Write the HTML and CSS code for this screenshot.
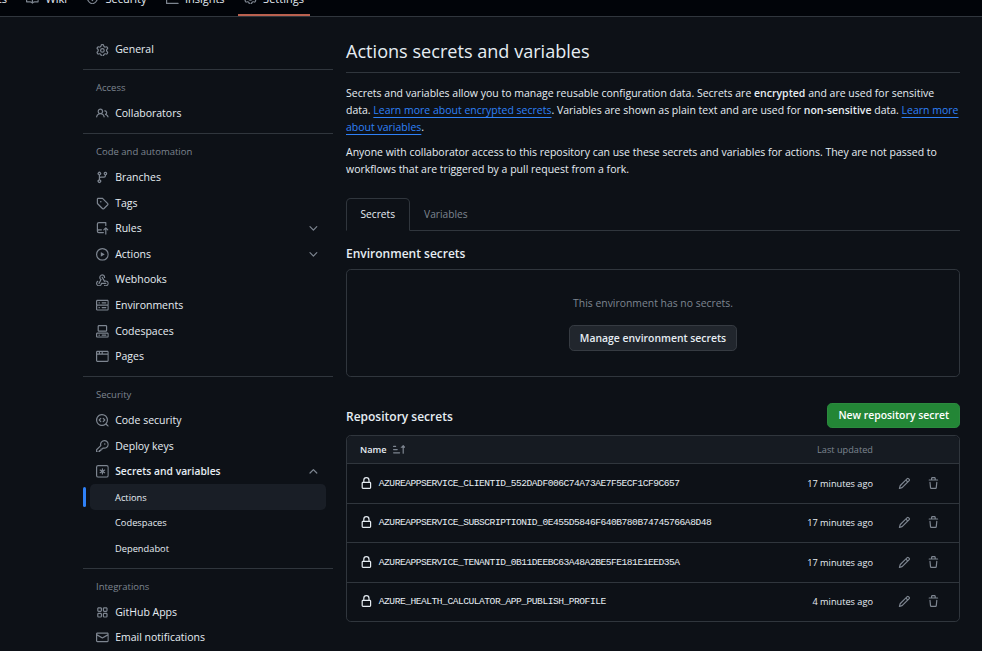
FILE: index.html
```html
<!DOCTYPE html>
<html>
<head>
    <title>Actions secrets and variables</title>
    <link rel="stylesheet" href="styles.css">
</head>
<body>
    <svg class="sprite" xmlns="http://www.w3.org/2000/svg">
        <symbol id="i-book" viewBox="0 0 16 16"><path d="M0 1.75A.75.75 0 0 1 .75 1h4.253c1.227 0 2.317.59 3 1.501A3.743 3.743 0 0 1 11.006 1h4.245a.75.75 0 0 1 .75.75v10.5a.75.75 0 0 1-.75.75h-4.507a2.25 2.25 0 0 0-1.591.659l-.622.621a.75.75 0 0 1-1.06 0l-.622-.621A2.25 2.25 0 0 0 5.258 13H.75a.75.75 0 0 1-.75-.75Zm7.251 10.324.004-5.073-.002-2.253A2.25 2.25 0 0 0 5.003 2.5H1.5v9h3.757a3.75 3.75 0 0 1 1.994.574ZM8.755 4.75l-.004 7.322a3.752 3.752 0 0 1 1.992-.572H14.5v-9h-3.495a2.25 2.25 0 0 0-2.25 2.25Z"/></symbol>
        <symbol id="i-shield" viewBox="0 0 16 16"><path d="M7.467.133a1.748 1.748 0 0 1 1.066 0l5.25 1.68A1.75 1.75 0 0 1 15 3.48V7c0 1.566-.32 3.182-1.303 4.682-.983 1.498-2.585 2.813-5.032 3.855a1.697 1.697 0 0 1-1.33 0c-2.447-1.042-4.049-2.357-5.032-3.855C1.32 10.182 1 8.566 1 7V3.48a1.75 1.75 0 0 1 1.217-1.667Zm.61 1.429a.25.25 0 0 0-.153 0l-5.25 1.68a.25.25 0 0 0-.174.238V7c0 1.358.275 2.666 1.057 3.86.784 1.194 2.121 2.34 4.366 3.297a.196.196 0 0 0 .154 0c2.245-.956 3.582-2.104 4.366-3.298C13.225 9.666 13.5 8.36 13.5 7V3.48a.251.251 0 0 0-.174-.237l-5.25-1.68ZM8.75 4.75v3a.75.75 0 0 1-1.5 0v-3a.75.75 0 0 1 1.5 0ZM9 10.5a1 1 0 1 1-2 0 1 1 0 0 1 2 0Z"/></symbol>
        <symbol id="i-graph" viewBox="0 0 16 16"><path d="M1.5 1.75V13.5h13.75a.75.75 0 0 1 0 1.5H.75a.75.75 0 0 1-.75-.75V1.75a.75.75 0 0 1 1.5 0Zm14.28 2.53-5.25 5.25a.75.75 0 0 1-1.06 0L7 7.06 4.28 9.78a.751.751 0 0 1-1.042-.018.751.751 0 0 1-.018-1.042l3.25-3.25a.75.75 0 0 1 1.06 0L10 7.94l4.72-4.72a.751.751 0 0 1 1.042.018.751.751 0 0 1 .018 1.042Z"/></symbol>
        <symbol id="i-gear" viewBox="0 0 16 16"><path d="M8 0a8.2 8.2 0 0 1 .701.031C9.444.095 9.99.645 10.16 1.29l.288 1.107c.018.066.079.158.212.224.231.114.454.243.668.386.123.082.233.09.299.071l1.103-.303c.644-.176 1.392.021 1.82.63.27.385.506.792.704 1.218.315.675.111 1.422-.364 1.891l-.814.806c-.049.048-.098.147-.088.294.016.257.016.515 0 .772-.01.147.038.246.088.294l.814.806c.475.469.679 1.216.364 1.891a7.977 7.977 0 0 1-.704 1.217c-.428.61-1.176.807-1.82.63l-1.102-.302c-.067-.019-.177-.011-.3.071a5.909 5.909 0 0 1-.668.386c-.133.066-.194.158-.211.224l-.29 1.106c-.168.646-.715 1.196-1.458 1.26a8.006 8.006 0 0 1-1.402 0c-.743-.064-1.289-.614-1.458-1.26l-.289-1.106c-.018-.066-.079-.158-.212-.224a5.738 5.738 0 0 1-.668-.386c-.123-.082-.233-.09-.299-.071l-1.103.303c-.644.176-1.392-.021-1.82-.63a8.12 8.12 0 0 1-.704-1.218c-.315-.675-.111-1.422.363-1.891l.815-.806c.05-.048.098-.147.088-.294a6.214 6.214 0 0 1 0-.772c.01-.147-.038-.246-.088-.294l-.815-.806C.635 6.045.431 5.298.746 4.623a7.92 7.92 0 0 1 .704-1.217c.428-.61 1.176-.807 1.82-.63l1.102.302c.067.019.177.011.3-.071.214-.143.437-.272.668-.386.133-.066.194-.158.211-.224l.29-1.106C6.009.645 6.556.095 7.299.03 7.53.01 7.764 0 8 0Zm-.571 1.525c-.036.003-.108.036-.137.146l-.289 1.105c-.147.561-.549.967-.998 1.189-.173.086-.34.183-.5.29-.417.278-.97.423-1.529.27l-1.103-.303c-.109-.03-.175.016-.195.045-.22.312-.412.644-.573.99-.014.031-.021.11.059.19l.815.806c.411.406.562.957.53 1.456a4.709 4.709 0 0 0 0 .582c.032.499-.119 1.05-.53 1.456l-.815.806c-.081.08-.073.159-.059.19.162.346.353.677.573.989.02.03.085.076.195.046l1.102-.303c.56-.153 1.113-.008 1.53.27.161.107.328.204.501.29.447.222.85.629.997 1.189l.289 1.105c.029.109.101.143.137.146a6.6 6.6 0 0 0 1.142 0c.036-.003.108-.036.137-.146l.289-1.105c.147-.561.549-.967.998-1.189.173-.086.34-.183.5-.29.417-.278.97-.423 1.529-.27l1.103.303c.109.029.175-.016.195-.045.22-.313.411-.644.573-.99.014-.031.021-.11-.059-.19l-.815-.806c-.411-.406-.562-.957-.53-1.456a4.709 4.709 0 0 0 0-.582c-.032-.499.119-1.05.53-1.456l.815-.806c.081-.08.073-.159.059-.19a6.464 6.464 0 0 0-.573-.989c-.02-.03-.085-.076-.195-.046l-1.102.303c-.56.153-1.113.008-1.53-.27a4.44 4.44 0 0 0-.501-.29c-.447-.222-.85-.629-.997-1.189l-.289-1.105c-.029-.11-.101-.143-.137-.146a6.6 6.6 0 0 0-1.142 0ZM11 8a3 3 0 1 1-6 0 3 3 0 0 1 6 0ZM9.5 8a1.5 1.5 0 1 0-3.001.001A1.5 1.5 0 0 0 9.5 8Z"/></symbol>
        <symbol id="i-people" viewBox="0 0 16 16"><path d="M2 5.5a3.5 3.5 0 1 1 5.898 2.549 5.508 5.508 0 0 1 3.034 4.084.75.75 0 1 1-1.482.235 4 4 0 0 0-7.9 0 .75.75 0 0 1-1.482-.236A5.507 5.507 0 0 1 3.102 8.05 3.493 3.493 0 0 1 2 5.5ZM11 4a3.001 3.001 0 0 1 2.22 5.018 5.01 5.01 0 0 1 2.56 3.012.749.749 0 0 1-.885.954.752.752 0 0 1-.549-.514 3.507 3.507 0 0 0-2.522-2.372.75.75 0 0 1-.574-.73v-.352a.75.75 0 0 1 .416-.672A1.5 1.5 0 0 0 11 5.5.75.75 0 0 1 11 4Zm-5.5-.5a2 2 0 1 0-.001 3.999A2 2 0 0 0 5.5 3.5Z"/></symbol>
        <symbol id="i-branch" viewBox="0 0 16 16"><path d="M9.5 3.25a2.25 2.25 0 1 1 3 2.122V6A2.5 2.5 0 0 1 10 8.5H6a1 1 0 0 0-1 1v1.128a2.251 2.251 0 1 1-1.5 0V5.372a2.25 2.25 0 1 1 1.5 0v1.836A2.493 2.493 0 0 1 6 7h4a1 1 0 0 0 1-1v-.628A2.25 2.25 0 0 1 9.5 3.25Zm-6 0a.75.75 0 1 0 1.5 0 .75.75 0 0 0-1.5 0Zm8.25-.75a.75.75 0 1 0 0 1.5.75.75 0 0 0 0-1.5ZM4.25 12a.75.75 0 1 0 0 1.5.75.75 0 0 0 0-1.5Z"/></symbol>
        <symbol id="i-tag" viewBox="0 0 16 16"><path d="M1 7.775V2.75C1 1.784 1.784 1 2.75 1h5.025c.464 0 .91.184 1.238.513l6.25 6.25a1.75 1.75 0 0 1 0 2.474l-5.026 5.026a1.75 1.75 0 0 1-2.474 0l-6.25-6.25A1.752 1.752 0 0 1 1 7.775Zm1.5 0c0 .066.026.13.073.177l6.25 6.25a.25.25 0 0 0 .354 0l5.025-5.025a.25.25 0 0 0 0-.354l-6.25-6.25a.25.25 0 0 0-.177-.073H2.75a.25.25 0 0 0-.25.25ZM6 5a1 1 0 1 1 0 2 1 1 0 0 1 0-2Z"/></symbol>
        <symbol id="i-rules" viewBox="0 0 16 16"><path d="M1 2.5A2.5 2.5 0 0 1 3.5 0h8.75a.75.75 0 0 1 .75.75v3.5a.75.75 0 0 1-1.5 0V1.5h-8a1 1 0 0 0-1 1v6.708A2.493 2.493 0 0 1 3.5 9h3.25a.75.75 0 0 1 0 1.5H3.5a1 1 0 0 0 0 2h5.75a.75.75 0 0 1 0 1.5H3.5A2.5 2.5 0 0 1 1 11.5Zm13.23 7.79h-.001l-1.224-1.224v6.184a.75.75 0 0 1-1.5 0V9.066L10.28 10.29a.75.75 0 0 1-1.06-1.061l2.505-2.504a.75.75 0 0 1 1.06 0L15.29 9.23a.751.751 0 0 1-.018 1.042.751.751 0 0 1-1.042.018Z"/></symbol>
        <symbol id="i-play" viewBox="0 0 16 16"><path d="M8 0a8 8 0 1 1 0 16A8 8 0 0 1 8 0ZM1.5 8a6.5 6.5 0 1 0 13 0 6.5 6.5 0 0 0-13 0Zm4.879-2.773 4.264 2.559a.25.25 0 0 1 0 .428l-4.264 2.559A.25.25 0 0 1 6 10.559V5.442a.25.25 0 0 1 .379-.215Z"/></symbol>
        <symbol id="i-webhook" viewBox="0 0 16 16"><path d="M5.5 4.25a2.25 2.25 0 0 1 4.5 0 .75.75 0 0 0 1.5 0 3.75 3.75 0 1 0-6.14 2.889l-2.272 4.258a.75.75 0 0 0 1.324.706L7 7.25a.75.75 0 0 0-.309-1.015A2.25 2.25 0 0 1 5.5 4.25Z"/><path d="M7.364 3.607a.75.75 0 0 1 1.03.257l2.608 4.349a3.75 3.75 0 1 1-.628 6.785.75.75 0 0 1 .752-1.299 2.25 2.25 0 1 0-.033-3.88.75.75 0 0 1-1.03-.256L7.107 4.636a.75.75 0 0 1 .257-1.03Z"/><path d="M2.9 8.776A.75.75 0 0 1 2.625 9.8 2.25 2.25 0 1 0 6 11.75a.75.75 0 0 1 .75-.751h5.5a.75.75 0 0 1 0 1.5H7.425a3.751 3.751 0 1 1-5.55-3.998.75.75 0 0 1 1.024.274Z"/></symbol>
        <symbol id="i-server" viewBox="0 0 16 16"><path d="M1.75 1h12.5c.966 0 1.75.784 1.75 1.75v4c0 .372-.116.717-.314 1 .198.283.314.628.314 1v4a1.75 1.75 0 0 1-1.75 1.75H1.75A1.75 1.75 0 0 1 0 13.25v-4c0-.372.116-.717.314-1a1.739 1.739 0 0 1-.314-1v-4C0 1.784.784 1 1.75 1ZM1.5 2.75v4c0 .138.112.25.25.25h12.5a.25.25 0 0 0 .25-.25v-4a.25.25 0 0 0-.25-.25H1.75a.25.25 0 0 0-.25.25Zm.25 5.75a.25.25 0 0 0-.25.25v4c0 .138.112.25.25.25h12.5a.25.25 0 0 0 .25-.25v-4a.25.25 0 0 0-.25-.25ZM7 4.75A.75.75 0 0 1 7.75 4h4.5a.75.75 0 0 1 0 1.5h-4.5A.75.75 0 0 1 7 4.75ZM7.75 10h4.5a.75.75 0 0 1 0 1.5h-4.5a.75.75 0 0 1 0-1.5ZM3 4.75A.75.75 0 0 1 3.75 4h.5a.75.75 0 0 1 0 1.5h-.5A.75.75 0 0 1 3 4.75ZM3.75 10h.5a.75.75 0 0 1 0 1.5h-.5a.75.75 0 0 1 0-1.5Z"/></symbol>
        <symbol id="i-codespaces" viewBox="0 0 16 16"><path d="M0 11.25c0-.966.784-1.75 1.75-1.75h12.5c.966 0 1.75.784 1.75 1.75v3A1.75 1.75 0 0 1 14.25 16H1.75A1.75 1.75 0 0 1 0 14.25Zm2-9.5C2 .784 2.784 0 3.75 0h8.5C13.216 0 14 .784 14 1.75v5a1.75 1.75 0 0 1-1.75 1.75h-8.5A1.75 1.75 0 0 1 2 6.75Zm1.75-.25a.25.25 0 0 0-.25.25v5c0 .138.112.25.25.25h8.5a.25.25 0 0 0 .25-.25v-5a.25.25 0 0 0-.25-.25Zm-2 9.5a.25.25 0 0 0-.25.25v3c0 .138.112.25.25.25h12.5a.25.25 0 0 0 .25-.25v-3a.25.25 0 0 0-.25-.25Z"/><path d="M7 12.75a.75.75 0 0 1 .75-.75h4.5a.75.75 0 0 1 0 1.5h-4.5a.75.75 0 0 1-.75-.75Zm-4 0a.75.75 0 0 1 .75-.75h.5a.75.75 0 0 1 0 1.5h-.5a.75.75 0 0 1-.75-.75Z"/></symbol>
        <symbol id="i-browser" viewBox="0 0 16 16"><path d="M0 2.75C0 1.784.784 1 1.75 1h12.5c.966 0 1.75.784 1.75 1.75v10.5A1.75 1.75 0 0 1 14.25 15H1.75A1.75 1.75 0 0 1 0 13.25ZM14.5 6h-13v7.25c0 .138.112.25.25.25h12.5a.25.25 0 0 0 .25-.25Zm-6-3.5v2h6V2.75a.25.25 0 0 0-.25-.25ZM5 2.5v2h2v-2Zm-3.25 0a.25.25 0 0 0-.25.25V4.5h2v-2Z"/></symbol>
        <symbol id="i-codescan" viewBox="0 0 16 16"><path d="M8.47 4.97a.75.75 0 0 0 0 1.06L9.94 7.5 8.47 8.97a.75.75 0 1 0 1.06 1.06l2-2a.75.75 0 0 0 0-1.06l-2-2a.75.75 0 0 0-1.06 0ZM6.53 6.03a.75.75 0 0 0-1.06-1.06l-2 2a.75.75 0 0 0 0 1.06l2 2a.75.75 0 1 0 1.06-1.06L5.06 7.5l1.47-1.47Z"/><path d="M12.246 13.307a7.501 7.501 0 1 1 1.06-1.06l2.474 2.473a.749.749 0 0 1-.326 1.275.749.749 0 0 1-.734-.215ZM1.5 7.5a6.002 6.002 0 0 0 3.608 5.504 6.002 6.002 0 0 0 6.486-1.117.748.748 0 0 1 .292-.293A6 6 0 1 0 1.5 7.5Z"/></symbol>
        <symbol id="i-key" viewBox="0 0 16 16"><path d="M10.5 0a5.499 5.499 0 1 1-1.288 10.848l-.932.932a.749.749 0 0 1-.53.22H7v.75a.749.749 0 0 1-.22.53l-.5.5a.749.749 0 0 1-.53.22H5v.75a.749.749 0 0 1-.22.53l-.5.5a.749.749 0 0 1-.53.22h-2A1.75 1.75 0 0 1 0 14.25v-2c0-.199.079-.389.22-.53l4.932-4.932A5.5 5.5 0 0 1 10.5 0Zm-4 5.5c-.001.431.069.86.205 1.269a.75.75 0 0 1-.181.768L1.5 12.56v1.69c0 .138.112.25.25.25h1.69l.06-.06v-1.19a.75.75 0 0 1 .75-.75h1.19l.06-.06v-1.19a.75.75 0 0 1 .75-.75h1.19l1.023-1.025a.75.75 0 0 1 .768-.18A4 4 0 1 0 6.5 5.5ZM11 6a1 1 0 1 1 0-2 1 1 0 0 1 0 2Z"/></symbol>
        <symbol id="i-asterisk" viewBox="0 0 16 16"><path d="M0 2.75A2.75 2.75 0 0 1 2.75 0h10.5A2.75 2.75 0 0 1 16 2.75v10.5A2.75 2.75 0 0 1 13.25 16H2.75A2.75 2.75 0 0 1 0 13.25ZM2.75 1.5c-.69 0-1.25.56-1.25 1.25v10.5c0 .69.56 1.25 1.25 1.25h10.5c.69 0 1.25-.56 1.25-1.25V2.75c0-.69-.56-1.25-1.25-1.25Z"/><path d="M8 4a.75.75 0 0 1 .75.75V6.7l1.69-.975a.75.75 0 0 1 .75 1.3L9.5 8l1.69.976a.75.75 0 0 1-.75 1.298L8.75 9.3v1.951a.75.75 0 0 1-1.5 0V9.299l-1.69.976a.75.75 0 0 1-.75-1.3L6.5 8l-1.69-.975a.75.75 0 0 1 .75-1.3l1.69.976V4.75A.75.75 0 0 1 8 4Z"/></symbol>
        <symbol id="i-apps" viewBox="0 0 16 16"><path d="M1.5 3.25c0-.966.784-1.75 1.75-1.75h2.5c.966 0 1.75.784 1.75 1.75v2.5A1.75 1.75 0 0 1 5.75 7.5h-2.5A1.75 1.75 0 0 1 1.5 5.75Zm7 0c0-.966.784-1.75 1.75-1.75h2.5c.966 0 1.75.784 1.75 1.75v2.5a1.75 1.75 0 0 1-1.75 1.75h-2.5A1.75 1.75 0 0 1 8.5 5.75Zm-7 7c0-.966.784-1.75 1.75-1.75h2.5c.966 0 1.75.784 1.75 1.75v2.5a1.75 1.75 0 0 1-1.75 1.75h-2.5a1.75 1.75 0 0 1-1.75-1.75Zm7 0c0-.966.784-1.75 1.75-1.75h2.5c.966 0 1.75.784 1.75 1.75v2.5a1.75 1.75 0 0 1-1.75 1.75h-2.5a1.75 1.75 0 0 1-1.75-1.75ZM3.25 3a.25.25 0 0 0-.25.25v2.5c0 .138.112.25.25.25h2.5A.25.25 0 0 0 6 5.75v-2.5A.25.25 0 0 0 5.75 3Zm7 0a.25.25 0 0 0-.25.25v2.5c0 .138.112.25.25.25h2.5a.25.25 0 0 0 .25-.25v-2.5a.25.25 0 0 0-.25-.25Zm-7 7a.25.25 0 0 0-.25.25v2.5c0 .138.112.25.25.25h2.5a.25.25 0 0 0 .25-.25v-2.5a.25.25 0 0 0-.25-.25Zm7 0a.25.25 0 0 0-.25.25v2.5c0 .138.112.25.25.25h2.5a.25.25 0 0 0 .25-.25v-2.5a.25.25 0 0 0-.25-.25Z"/></symbol>
        <symbol id="i-mail" viewBox="0 0 16 16"><path d="M1.75 2h12.5c.966 0 1.75.784 1.75 1.75v8.5A1.75 1.75 0 0 1 14.25 14H1.75A1.75 1.75 0 0 1 0 12.25v-8.5C0 2.784.784 2 1.75 2ZM1.5 12.251c0 .138.112.25.25.25h12.5a.25.25 0 0 0 .25-.25V5.809L8.38 9.397a.75.75 0 0 1-.76 0L1.5 5.809v6.442Zm13-8.181v-.32a.25.25 0 0 0-.25-.25H1.75a.25.25 0 0 0-.25.25v.32L8 7.88Z"/></symbol>
        <symbol id="i-down" viewBox="0 0 16 16"><path d="M12.78 5.22a.749.749 0 0 1 0 1.06l-4.25 4.25a.749.749 0 0 1-1.06 0L3.22 6.28a.749.749 0 1 1 1.06-1.06L8 8.939l3.72-3.719a.749.749 0 0 1 1.06 0Z"/></symbol>
        <symbol id="i-up" viewBox="0 0 16 16"><path d="M3.22 10.53a.749.749 0 0 1 0-1.06l4.25-4.25a.749.749 0 0 1 1.06 0l4.25 4.25a.749.749 0 1 1-1.06 1.06L8 6.811 4.28 10.53a.749.749 0 0 1-1.06 0Z"/></symbol>
        <symbol id="i-lock" viewBox="0 0 16 16"><path d="M4 4a4 4 0 0 1 8 0v2h.25c.966 0 1.75.784 1.75 1.75v5.5A1.75 1.75 0 0 1 12.25 15h-8.5A1.75 1.75 0 0 1 2 13.25v-5.5C2 6.784 2.784 6 3.75 6H4Zm8.25 3.5h-8.5a.25.25 0 0 0-.25.25v5.5c0 .138.112.25.25.25h8.5a.25.25 0 0 0 .25-.25v-5.5a.25.25 0 0 0-.25-.25ZM10.5 6V4a2.5 2.5 0 1 0-5 0v2Z"/></symbol>
        <symbol id="i-pencil" viewBox="0 0 16 16"><path d="M11.013 1.427a1.75 1.75 0 0 1 2.474 0l1.086 1.086a1.75 1.75 0 0 1 0 2.474l-8.61 8.61c-.21.21-.47.364-.756.445l-3.251.93a.75.75 0 0 1-.927-.928l.929-3.25c.081-.286.235-.547.445-.758l8.61-8.61Zm.176 4.823L9.75 4.81l-6.286 6.287a.253.253 0 0 0-.064.108l-.558 1.953 1.953-.558a.253.253 0 0 0 .108-.064Zm1.238-3.763a.25.25 0 0 0-.354 0L10.811 3.75l1.439 1.44 1.263-1.263a.25.25 0 0 0 0-.354Z"/></symbol>
        <symbol id="i-trash" viewBox="0 0 16 16"><path d="M11 1.75V3h2.25a.75.75 0 0 1 0 1.5H2.75a.75.75 0 0 1 0-1.5H5V1.75C5 .784 5.784 0 6.75 0h2.5C10.216 0 11 .784 11 1.75ZM4.496 6.675l.66 6.6a.25.25 0 0 0 .249.225h5.19a.25.25 0 0 0 .249-.225l.66-6.6a.75.75 0 0 1 1.492.149l-.66 6.6A1.748 1.748 0 0 1 10.595 15h-5.19a1.75 1.75 0 0 1-1.741-1.575l-.66-6.6a.75.75 0 1 1 1.492-.15ZM6.5 1.75V3h3V1.75a.25.25 0 0 0-.25-.25h-2.5a.25.25 0 0 0-.25.25Z"/></symbol>
        <symbol id="i-sort" viewBox="0 0 16 16"><path d="m12.927 2.573 3 3A.25.25 0 0 1 15.75 6H13.5v6.75a.75.75 0 0 1-1.5 0V6H9.75a.25.25 0 0 1-.177-.427l3-3a.25.25 0 0 1 .354 0ZM0 12.25a.75.75 0 0 1 .75-.75h7.5a.75.75 0 0 1 0 1.5H.75a.75.75 0 0 1-.75-.75Zm0-4a.75.75 0 0 1 .75-.75h4.5a.75.75 0 0 1 0 1.5H.75A.75.75 0 0 1 0 8.25Zm0-4a.75.75 0 0 1 .75-.75h2.5a.75.75 0 0 1 0 1.5H.75A.75.75 0 0 1 0 4.25Z"/></symbol>
    </svg>

    <div class="repo-nav">
        <a class="repo-tab tab-first">Projects</a>
        <a class="repo-tab"><svg class="icon"><use href="#i-book"/></svg>Wiki</a>
        <a class="repo-tab"><svg class="icon"><use href="#i-shield"/></svg>Security</a>
        <a class="repo-tab"><svg class="icon"><use href="#i-graph"/></svg>Insights</a>
        <a class="repo-tab selected"><svg class="icon"><use href="#i-gear"/></svg>Settings</a>
    </div>

    <div class="page">
        <nav class="side">
            <a class="side-item"><svg class="icon"><use href="#i-gear"/></svg>General</a>
            <hr class="side-line">
            <div class="side-head">Access</div>
            <a class="side-item"><svg class="icon"><use href="#i-people"/></svg>Collaborators</a>
            <hr class="side-line">
            <div class="side-head">Code and automation</div>
            <a class="side-item"><svg class="icon"><use href="#i-branch"/></svg>Branches</a>
            <a class="side-item"><svg class="icon"><use href="#i-tag"/></svg>Tags</a>
            <a class="side-item"><svg class="icon"><use href="#i-rules"/></svg>Rules<svg class="icon chevron"><use href="#i-down"/></svg></a>
            <a class="side-item"><svg class="icon"><use href="#i-play"/></svg>Actions<svg class="icon chevron"><use href="#i-down"/></svg></a>
            <a class="side-item"><svg class="icon"><use href="#i-webhook"/></svg>Webhooks</a>
            <a class="side-item"><svg class="icon"><use href="#i-server"/></svg>Environments</a>
            <a class="side-item"><svg class="icon"><use href="#i-codespaces"/></svg>Codespaces</a>
            <a class="side-item"><svg class="icon"><use href="#i-browser"/></svg>Pages</a>
            <hr class="side-line">
            <div class="side-head">Security</div>
            <a class="side-item"><svg class="icon"><use href="#i-codescan"/></svg>Code security</a>
            <a class="side-item"><svg class="icon"><use href="#i-key"/></svg>Deploy keys</a>
            <a class="side-item open"><svg class="icon"><use href="#i-asterisk"/></svg>Secrets and variables<svg class="icon chevron"><use href="#i-up"/></svg></a>
            <a class="side-item sub current">Actions</a>
            <a class="side-item sub">Codespaces</a>
            <a class="side-item sub">Dependabot</a>
            <hr class="side-line">
            <div class="side-head">Integrations</div>
            <a class="side-item"><svg class="icon"><use href="#i-apps"/></svg>GitHub Apps</a>
            <a class="side-item"><svg class="icon"><use href="#i-mail"/></svg>Email notifications</a>
        </nav>

        <main class="content">
            <h1 class="title">Actions secrets and variables</h1>
            <p class="intro">Secrets and variables allow you to manage reusable configuration data. Secrets are <b>encrypted</b> and are used for sensitive data. <a href="#">Learn more about encrypted secrets</a>. Variables are shown as plain text and are used for <b>non-sensitive</b> data. <a href="#">Learn more about variables</a>.</p>
            <p class="intro">Anyone with collaborator access to this repository can use these secrets and variables for actions. They are not passed to workflows that are triggered by a pull request from a fork.</p>

            <div class="tabs">
                <a class="tab active">Secrets</a>
                <a class="tab">Variables</a>
            </div>

            <h2 class="section env-head">Environment secrets</h2>
            <div class="box empty">
                <p class="empty-text">This environment has no secrets.</p>
                <a class="btn">Manage environment secrets</a>
            </div>

            <div class="section-row">
                <h2 class="section">Repository secrets</h2>
                <a class="btn btn-green">New repository secret</a>
            </div>
            <div class="box">
                <div class="row row-head">
                    <span class="name-head">Name <svg class="icon"><use href="#i-sort"/></svg></span>
                    <span class="time muted">Last updated</span>
                    <span class="actions"></span>
                </div>
                <div class="row">
                    <span class="name"><svg class="icon lock"><use href="#i-lock"/></svg><code>AZUREAPPSERVICE_CLIENTID_552DADF006C74A73AE7F5ECF1CF9C657</code></span>
                    <span class="time">17 minutes ago</span>
                    <span class="actions"><svg class="icon"><use href="#i-pencil"/></svg><svg class="icon"><use href="#i-trash"/></svg></span>
                </div>
                <div class="row">
                    <span class="name"><svg class="icon lock"><use href="#i-lock"/></svg><code>AZUREAPPSERVICE_SUBSCRIPTIONID_0E455D5846F640B780B74745766A8D48</code></span>
                    <span class="time">17 minutes ago</span>
                    <span class="actions"><svg class="icon"><use href="#i-pencil"/></svg><svg class="icon"><use href="#i-trash"/></svg></span>
                </div>
                <div class="row">
                    <span class="name"><svg class="icon lock"><use href="#i-lock"/></svg><code>AZUREAPPSERVICE_TENANTID_0B11DEEBC63A48A2BE5FE181E1EED35A</code></span>
                    <span class="time">17 minutes ago</span>
                    <span class="actions"><svg class="icon"><use href="#i-pencil"/></svg><svg class="icon"><use href="#i-trash"/></svg></span>
                </div>
                <div class="row">
                    <span class="name"><svg class="icon lock"><use href="#i-lock"/></svg><code>AZURE_HEALTH_CALCULATOR_APP_PUBLISH_PROFILE</code></span>
                    <span class="time">4 minutes ago</span>
                    <span class="actions"><svg class="icon"><use href="#i-pencil"/></svg><svg class="icon"><use href="#i-trash"/></svg></span>
                </div>
            </div>
        </main>
    </div>
</body>
</html>
```

FILE: styles.css
```css
* {
    box-sizing: border-box;
}

html, body {
    height: 651px;
    overflow: hidden;
}

body {
    margin: 0;
    background: #0d1117;
    color: #e6edf3;
    font-family: "Open Sans", "Noto Sans", sans-serif;
    font-size: 10.5px;
    line-height: 17px;
}

.sprite {
    display: none;
}

.icon {
    width: 12.8px;
    height: 12.8px;
    flex: none;
    fill: #7d8590;
}

/* top tab strip, cut off by the window */
.repo-nav {
    display: flex;
    align-items: flex-end;
    height: 17px;
    background: #010409;
    border-bottom: 1px solid #30363d;
    overflow: hidden;
    font-size: 11px;
}

.repo-tab {
    display: flex;
    flex: none;
    align-items: center;
    gap: 6.4px;
    height: 26px;
    padding: 0 6px 8px;
    margin-left: 7.3px;
    border-bottom: 2px solid transparent;
}

.tab-first {
    width: 13px;
    margin-left: 0;
    justify-content: flex-end;
    overflow: hidden;
}

.repo-tab.selected {
    border-bottom-color: #b9614f;
}

/* layout */
.page {
    display: flex;
    padding-left: 83px;
}

.side {
    flex: none;
    width: 250px;
    padding-top: 20.2px;
    margin-right: 13px;
}

.side-item {
    display: flex;
    align-items: center;
    gap: 6.4px;
    height: 25.6px;
    margin: 0 7px;
    padding: 0 6px;
    border-radius: 4.8px;
    position: relative;
}

.side-item.open {
    font-weight: 600;
    font-size: 10.3px;
}

.side-item.sub {
    padding-left: 25px;
    font-size: 9.3px;
}

.side-item.current {
    background: #191e26;
}

/* blue marker of the selected item */
.side-item.current::after {
    content: "";
    position: absolute;
    left: -7px;
    top: 3px;
    bottom: 3px;
    width: 3px;
    border-radius: 2px;
    background: #2f81f7;
}

.chevron {
    margin-left: auto;
}

.side-line {
    height: 1px;
    margin: 6.4px 0 0;
    border: 0;
    background: #30363d;
}

.side-head {
    height: 30.8px;
    padding: 11px 13px 0;
    font-size: 9.5px;
    line-height: 13px;
    color: #7d8590;
}

.content {
    width: 614px;
}

.title {
    margin: 0;
    padding: 22px 0 8px;
    border-bottom: 1px solid #30363d;
    font-size: 18.1px;
    font-weight: 400;
    line-height: 25px;
}

.intro {
    margin: 12px 0 8px;
}

.intro + .intro {
    margin-top: 0;
}

.intro a {
    color: #2f81f7;
    text-decoration: underline;
    text-underline-offset: 3px;
}

.intro b {
    font-weight: 600;
}

.tabs {
    display: flex;
    height: 33px;
    margin-top: 20px;
    border-bottom: 1px solid #30363d;
}

.tab {
    display: flex;
    align-items: center;
    height: 33px;
    padding: 0 13.5px;
    border: 1px solid transparent;
    border-radius: 4.8px 4.8px 0 0;
    color: #7d8590;
    font-size: 10.2px;
}

.tab.active {
    border-color: #30363d;
    border-bottom-color: #0d1117;
    color: #e6edf3;
}

.section {
    margin: 0;
    font-size: 12px;
    font-weight: 600;
    line-height: 17px;
}

.env-head {
    margin-top: 14px;
}

.box {
    border: 1px solid #30363d;
    border-radius: 4.8px;
}

.empty {
    display: flex;
    flex-direction: column;
    align-items: center;
    height: 108px;
    margin-top: 7px;
    padding-top: 25px;
}

.empty-text {
    margin: 0 0 13px;
    color: #7d8590;
    font-size: 10.4px;
}

.btn {
    display: flex;
    align-items: center;
    height: 26px;
    padding: 0 10px;
    border: 1px solid #363b42;
    border-radius: 4.8px;
    background: #21262d;
    font-size: 10.4px;
    font-weight: 600;
}

.btn-green {
    height: 25px;
    border-color: #2b8a3e;
    background: #238636;
    color: #fff;
}

.section-row {
    display: flex;
    justify-content: space-between;
    align-items: center;
    margin: 26px 0 7px;
}

.section-row .section {
    padding-top: 2px;
}

.row {
    display: flex;
    align-items: center;
    height: 39.5px;
    padding-left: 13px;
    border-top: 1px solid #30363d;
}

.row-head {
    height: 27px;
    border-top: 0;
    background: #161b22;
    border-radius: 4.8px 4.8px 0 0;
    font-size: 9.2px;
}

.name-head {
    display: flex;
    align-items: center;
    gap: 6px;
    flex: 1;
    font-weight: 600;
}

.name {
    display: flex;
    align-items: center;
    gap: 6px;
    flex: 1;
    min-width: 0;
}

.lock {
    fill: #e6edf3;
}

code {
    font-family: "Liberation Mono", monospace;
    font-size: 9.6px;
    letter-spacing: -0.48px;
}

.time {
    font-size: 9.2px;
}

.muted {
    color: #7d8590;
}

.actions {
    display: flex;
    flex: none;
    justify-content: flex-end;
    gap: 16px;
    width: 86px;
    padding-right: 19px;
}
```
